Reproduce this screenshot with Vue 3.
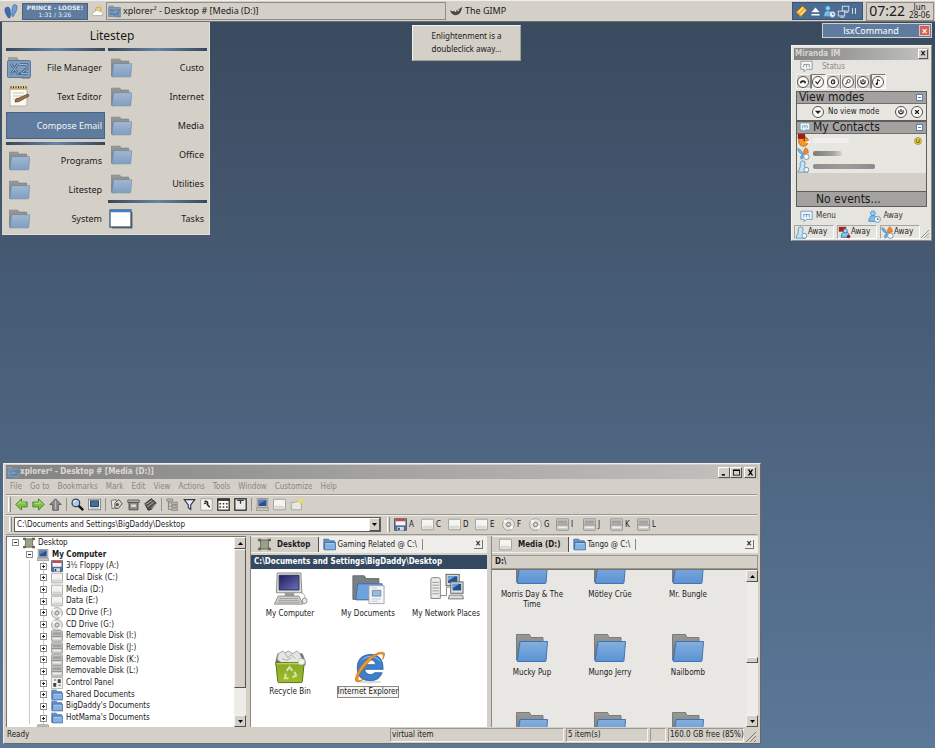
<script setup>
import { ref } from "vue";

// --- LITESTEP MENU ---
const menuLeft = [
  [
    { label: "File Manager", icon: "xp2" },
    { label: "Text Editor", icon: "notepad" },
    { label: "Compose Email", icon: "", active: true },
  ],
  [
    { label: "Programs", icon: "folder" },
    { label: "Litestep", icon: "folder" },
    { label: "System", icon: "folder" },
  ],
];
const menuRight = [
  [
    { label: "Custo", icon: "folder" },
    { label: "Internet", icon: "folder" },
    { label: "Media", icon: "folder" },
    { label: "Office", icon: "folder" },
    { label: "Utilities", icon: "folder" },
  ],
  [{ label: "Tasks", icon: "tasks" }],
];
const menuColumns = [menuLeft, menuRight];

// --- XPLORER WINDOW ---
const menus = ["File", "Go to", "Bookmarks", "Mark", "Edit", "View", "Actions", "Tools", "Window", "Customize", "Help"];
const toolGroups = [
  ["back", "forward", "up"],
  ["search", "screen"],
  ["copy", "archive", "eraser"],
  ["tree", "funnel", "wrench", "grid", "pane"],
  ["computer", "drive", "newfolder"],
];
const drives = [
  { letter: "A", icon: "floppy" },
  { letter: "C", icon: "drive" },
  { letter: "D", icon: "drive" },
  { letter: "E", icon: "drive" },
  { letter: "F", icon: "cd" },
  { letter: "G", icon: "cd" },
  { letter: "I", icon: "removable" },
  { letter: "J", icon: "removable" },
  { letter: "K", icon: "removable" },
  { letter: "L", icon: "removable" },
];
const address = ref("C:\\Documents and Settings\\BigDaddy\\Desktop");

const tree = [
  { label: "Desktop", icon: "desktop", level: 0, sign: "−" },
  { label: "My Computer", icon: "computer", level: 1, sign: "−", bold: true },
  { label: "3½ Floppy (A:)", icon: "floppy", level: 2 },
  { label: "Local Disk (C:)", icon: "drive", level: 2 },
  { label: "Media (D:)", icon: "drive", level: 2 },
  { label: "Data (E:)", icon: "drive", level: 2 },
  { label: "CD Drive (F:)", icon: "cd", level: 2 },
  { label: "CD Drive (G:)", icon: "cd", level: 2 },
  { label: "Removable Disk (I:)", icon: "removable", level: 2 },
  { label: "Removable Disk (J:)", icon: "removable", level: 2 },
  { label: "Removable Disk (K:)", icon: "removable", level: 2 },
  { label: "Removable Disk (L:)", icon: "removable", level: 2 },
  { label: "Control Panel", icon: "control", level: 2 },
  { label: "Shared Documents", icon: "smallfolder", level: 2 },
  { label: "BigDaddy's Documents", icon: "smallfolder", level: 2 },
  { label: "HotMama's Documents", icon: "smallfolder", level: 2 },
];

const panes = [
  {
    id: "left",
    tab: "Desktop",
    tabIcon: "desktop",
    other: "Gaming Related @ C:\\",
    path: "C:\\Documents and Settings\\BigDaddy\\Desktop",
    items: [
      { label: "My Computer", icon: "bigcomputer" },
      { label: "My Documents", icon: "bigdocs" },
      { label: "My Network Places", icon: "bignetwork" },
      { label: "Recycle Bin", icon: "bigbin" },
      { label: "Internet Explorer", icon: "bigie", focus: true },
    ],
  },
  {
    id: "right",
    tab: "Media (D:)",
    tabIcon: "drive",
    other: "Tango @ C:\\",
    path: "D:\\",
    items: [
      { label: "Morris Day & The Time", icon: "folder" },
      { label: "Mötley Crüe", icon: "folder" },
      { label: "Mr. Bungle", icon: "folder" },
      { label: "Mucky Pup", icon: "folder" },
      { label: "Mungo Jerry", icon: "folder" },
      { label: "Nailbomb", icon: "folder" },
      { label: "", icon: "folder" },
      { label: "", icon: "folder" },
      { label: "", icon: "folder" },
    ],
  },
];

// --- MIRANDA ---
const mirandaTools = ["phone", "check", "g", "lens", "power", "note"];
const protocols = ["icq", "msn", "wing"];
</script>

<template>
  <div class="desktop">
    <svg class="sprite" width="0" height="0" aria-hidden="true">
      <defs>
        <linearGradient id="gBack" x1="0" y1="0" x2="0" y2="1">
          <stop offset="0" stop-color="#9a9a98" />
          <stop offset="1" stop-color="#6b6f74" />
        </linearGradient>
        <linearGradient id="gShine" x1="0" y1="0" x2="0" y2="1">
          <stop offset="0" stop-color="#fff" stop-opacity=".25" />
          <stop offset="1" stop-color="#fff" stop-opacity="0" />
        </linearGradient>
        <linearGradient id="gScreen" x1="0" y1="0" x2="1" y2="1">
          <stop offset="0" stop-color="#1f1d5c" />
          <stop offset="1" stop-color="#6d72b8" />
        </linearGradient>
        <linearGradient id="gGreen" x1="0" y1="0" x2="0" y2="1">
          <stop offset="0" stop-color="#8aa62a" />
          <stop offset="1" stop-color="#9dbd2c" />
        </linearGradient>
      </defs>

      <symbol id="folder" viewBox="0 0 32 30">
        <path d="M.5 27V1.500h13l1.500 3h12V14L4 28z" fill="url(#gBack)" stroke="#7b7b78" />
        <path d="M4 8.500h27.500L30 27.500q0 1-1 1H2q-1 0-.8-1z" class="f-front" />
        <path d="M4.500 9H31L29.500 28H2z" fill="url(#gShine)" />
      </symbol>
      <symbol id="xp2" viewBox="0 0 24 24">
        <path d="M1 1h9l2 3h9v4H1zM14 20h9v3h-8z" fill="#a19f9a" />
        <rect x=".5" y="4.500" width="23" height="17" rx="1" fill="#7d9dbf" stroke="#5c7796" />
        <path d="M4 8l7 10M11 8L4 18M13 8.500h7v4l-6 5h7" fill="none" stroke="#44607f" stroke-width="2.600" />
        <path d="M4 8l7 10M11 8L4 18M13 8.500h7v4l-6 5h7" fill="none" stroke="#9db9d6" stroke-width="1" />
      </symbol>
      <symbol id="notepad" viewBox="0 0 24 24">
        <path d="M3 3h17v16q0 2-2 2H3z" fill="#fbfaf5" stroke="#b5b2a5" />
        <path d="M4 1v3M6.500 1v3M9 1v3M11.500 1v3M14 1v3M16.500 1v3M19 1v3" stroke="#4e3d17" />
        <path d="M3 4h17" stroke="#c9ad61" stroke-width="1.500" />
        <path d="M6 8h11M6 11h11M6 14h9" stroke="#c9c9c4" />
        <path d="M8 17q0-4 4-4l9-4 1 2-9 5q-2 1-5 1z" fill="#a3733f" stroke="#4d3a20" stroke-width=".7" />
      </symbol>
      <symbol id="tasks" viewBox="0 0 24 20">
        <path d="M2 3h21.500v16.500H3z" fill="#6d6f70" />
        <rect x="1" y="1" width="21" height="17" fill="#fff" stroke="#2c4f75" stroke-width="1.200" />
        <path d="M1 2h21" stroke="#457fb9" stroke-width="2.500" />
      </symbol>

      <!-- small icons, 16 unit grid -->
      <symbol id="smallfolder" viewBox="0 0 16 16">
        <path d="M1 14V1.500h6l1.500 2H14V8" fill="#6a94c6" stroke="#456d9d" />
        <path d="M2.500 5.500h13v9h-14z" fill="#85b1e3" stroke="#3667a3" />
        <path d="M3 7h11" stroke="#b7d3f2" />
      </symbol>
      <symbol id="desktop" viewBox="0 0 16 16">
        <path d="M0 1h4v3H0zM12 1h4v3h-4zM0 12h4v3H0zM12 12h4v3h-4z" fill="#6a6c63" />
        <path d="M2.500 2.500h11l-1 5 1 6h-11l1-6z" fill="#97a586" stroke="#4f5548" />
      </symbol>
      <symbol id="computer" viewBox="0 0 16 16">
        <rect x="1.500" y=".5" width="13" height="11" fill="#dfdfdb" stroke="#8b8b87" />
        <rect x="3" y="2" width="10" height="8" fill="#2c4f92" />
        <path d="M3 2h10L3 8z" fill="#5c7fbd" />
        <path d="M1 12h14l1 3.500H0z" fill="#c8c8c3" stroke="#85857f" stroke-width=".8" />
      </symbol>
      <symbol id="screen" viewBox="0 0 16 16">
        <rect x=".5" y="1.500" width="15" height="13" fill="#eeeeea" stroke="#777" />
        <rect x="3" y="3.500" width="10" height="7" fill="#4a6c9c" stroke="#143159" />
        <path d="M3 12.500h10" stroke="#999" />
      </symbol>
      <symbol id="floppy" viewBox="0 0 16 16">
        <rect x=".5" y=".5" width="15" height="15" rx="1" fill="#51719b" stroke="#344a68" />
        <path d="M2 1h12v8H2z" fill="#f6f5f5" />
        <path d="M2 1h12v3H2z" fill="#cf4444" />
        <path d="M4 11h8v4.500H4z" fill="#d7dbe2" />
        <path d="M5 12h2v3H5z" fill="#2a3d5b" />
      </symbol>
      <symbol id="drive" viewBox="0 0 16 16">
        <rect x=".5" y="1.500" width="15" height="13" rx="1" fill="#f4f4f1" stroke="#8f8f8b" />
        <path d="M2 11h12" stroke="#b6b6b2" />
        <path d="M4 9h1M7 9h1M10 9h1" stroke="#d1d1cd" />
        <path d="M1.500 12.500h13" stroke="#cfcfcb" />
      </symbol>
      <symbol id="removable" viewBox="0 0 16 16">
        <rect x=".5" y="1" width="15" height="14" rx="1" fill="#d0d0cd" stroke="#858581" />
        <path d="M2 3h12v4H2z" fill="#a1a19f" />
        <path d="M1 8.500h14" stroke="#777" />
        <path d="M3 11.500h10" stroke="#f3f3f1" stroke-width="1.500" />
      </symbol>
      <symbol id="cd" viewBox="0 0 16 16">
        <circle cx="8" cy="8" r="7.300" fill="#e4e4e1" stroke="#94948f" />
        <path d="M8 8L3 3M8 8l5 5" stroke="#fff" stroke-width="3" />
        <circle cx="8" cy="8" r="2.800" fill="#bdbdb9" stroke="#797975" />
        <circle cx="8" cy="8" r="1" fill="#fff" />
      </symbol>
      <symbol id="control" viewBox="0 0 16 16">
        <rect x=".5" y=".5" width="15" height="15" fill="#f3f3f0" stroke="#aaa" />
        <path d="M3 8h4v5H3zM9 3h4v5H9z" fill="#3f4a3c" />
        <path d="M4 4h3M10 11h3" stroke="#888" stroke-width="2" />
      </symbol>
      <symbol id="back" viewBox="0 0 16 16">
        <path d="M1 8l7-7v4h7v6H8v4z" fill="#7cc344" stroke="#3d7a17" />
        <path d="M3 8l4-4v2h6" stroke="#c5ee95" fill="none" />
      </symbol>
      <symbol id="forward" viewBox="0 0 16 16">
        <path d="M15 8L8 1v4H1v6h7v4z" fill="#7cc344" stroke="#3d7a17" />
        <path d="M3 6.500h6V4l4 4" stroke="#c5ee95" fill="none" />
      </symbol>
      <symbol id="up" viewBox="0 0 16 16">
        <path d="M8 1l7 7h-3.500v7h-7V8H1z" fill="#8c8d8b" stroke="#4e4f4d" />
        <path d="M8 3v11" stroke="#c4c5c3" />
      </symbol>
      <symbol id="search" viewBox="0 0 16 16">
        <path d="M9 9l6 6" stroke="#151515" stroke-width="3" />
        <circle cx="6" cy="6" r="4.700" fill="#a9cbe8" stroke="#33404e" stroke-width="1.500" />
        <path d="M3.500 6q0-3 3-3" stroke="#fff" fill="none" />
      </symbol>
      <symbol id="copy" viewBox="0 0 16 16">
        <path d="M1.500 3l6-1 2 10-7 1z" fill="#e6e6e2" stroke="#62625f" />
        <path d="M6 6l5-4 4 5-5 6-4-1z" fill="#d8d8d4" stroke="#3e3e3c" />
        <circle cx="9" cy="8" r="2" fill="#555" />
      </symbol>
      <symbol id="archive" viewBox="0 0 16 16">
        <path d="M2.500 5.500h11v9h-11z" fill="#8f8f8c" stroke="#393937" />
        <path d="M1 2.500h14v3H1z" fill="#b6b6b2" stroke="#454543" />
        <path d="M5 8h6v3H5z" fill="#dededb" />
      </symbol>
      <symbol id="eraser" viewBox="0 0 16 16">
        <path d="M1 7l8-6 6 5-6 8-4 1z" fill="#4f4f4d" stroke="#222" />
        <path d="M2 8l8-5M4 11l8-6M9 13l5-6" stroke="#c9c9c6" />
      </symbol>
      <symbol id="tree" viewBox="0 0 16 16">
        <path d="M3 3v11h4M3 6h4M3 10h4" stroke="#777" fill="none" />
        <path d="M1 1h7v3H1zM7 5h7v3H7zM7 9h7v2.500H7zM7 12.500h7v3H7z" fill="#b6b6b2" stroke="#7c7c78" stroke-width=".8" />
      </symbol>
      <symbol id="funnel" viewBox="0 0 16 16">
        <path d="M1.500 2h13L9.500 8.500V14l-3-2V8.500z" fill="#e9edf2" stroke="#273649" stroke-width="1.400" />
      </symbol>
      <symbol id="wrench" viewBox="0 0 16 16">
        <rect x="1" y="1" width="14" height="14" fill="#f4f4f1" stroke="#999" />
        <path d="M5.500 4.500a2.500 2.500 0 0 1 3.500 3.500l3 3.500" stroke="#222" stroke-width="1.800" fill="none" />
        <path d="M5 7l3-1" stroke="#222" stroke-width="1.500" />
      </symbol>
      <symbol id="grid" viewBox="0 0 16 16">
        <rect x="1" y="1" width="14" height="14" fill="#fff" stroke="#222" stroke-width="1.500" />
        <path d="M1 2.500h14" stroke="#222" stroke-width="2" />
        <path d="M3 7h10M3 11h10" stroke="#333" stroke-width="2" stroke-dasharray="2 2" />
      </symbol>
      <symbol id="pane" viewBox="0 0 16 16">
        <rect x="1" y="1" width="14" height="14" fill="#e8e8e4" stroke="#222" stroke-width="1.500" />
        <path d="M4 3h8M8 3v4" stroke="#333" stroke-width="1.500" />
      </symbol>
      <symbol id="newfolder" viewBox="0 0 16 16">
        <path d="M1.500 14.500v-9H6l1-1h5l2 2v8z" fill="#e8e7e0" stroke="#9c9b94" />
        <path d="M13 0v7M9.500 3.500h7" stroke="#f0df4e" stroke-width="2" />
      </symbol>

      <!-- large file icons -->
      <symbol id="bigcomputer" viewBox="0 0 36 36">
        <path d="M4 1h25l1 21H3z" fill="#dcdcd8" stroke="#888984" />
        <path d="M6 3.500h21v15.500H6z" fill="url(#gScreen)" stroke="#29285b" />
        <path d="M12 22h10v4H12z" fill="#9b9b97" />
        <path d="M5 25.500h22l4 8.500H1z" fill="#d6d6d1" stroke="#888984" />
        <path d="M6 28h20M5 30h22M4 32h24" stroke="#9d9d99" />
        <path d="M29 22q5 1 4 6" fill="none" stroke="#aaa" />
        <ellipse cx="33" cy="30.500" rx="2.500" ry="3" fill="#e9e9e5" stroke="#8d8d89" />
      </symbol>
      <symbol id="bigdocs" viewBox="0 0 36 36">
        <path d="M1.500 29V4h12l2 3H29v22z" fill="#7a7f84" stroke="#64696e" />
        <path d="M6.500 12.500h26l-1 17H4.500z" fill="#6fa3dc" stroke="#3b6dab" />
        <path d="M18.500 14.500h16v19h-16z" fill="#f5f6f8" stroke="#9ea4ab" />
        <path d="M22 19.500h9v6h-9z" fill="#9bbbe0" stroke="#7188a4" />
        <path d="M21 17h6M21 28.500h10M21 31h7" stroke="#c0c3c8" />
      </symbol>
      <symbol id="bignetwork" viewBox="0 0 36 36">
        <path d="M1.500 8q0-2 2-2h6q2 0 2 2v20h-10z" fill="#ebebe7" stroke="#7f807c" />
        <path d="M3 11h7M3 14h7M3 17h7M3 20h7M3 23h7" stroke="#989995" />
        <rect x="17.500" y="2.500" width="14" height="12" fill="#d9dad7" stroke="#5e625f" />
        <rect x="19.500" y="4.500" width="10" height="7" fill="#1f5296" />
        <path d="M19.500 4.500h8l-8 5z" fill="#79a4d6" />
        <path d="M12 25h6V16h4" fill="none" stroke="#7d807c" />
        <rect x="22.500" y="10.500" width="13" height="12" fill="#e1e2de" stroke="#5b5e5a" />
        <rect x="24.500" y="12.500" width="9" height="7" fill="#1f4e91" />
        <path d="M24.500 12.500h7l-7 5z" fill="#6c9bd3" />
        <path d="M21 24.500h14l1 4H20z" fill="#dadbd7" stroke="#777a76" />
      </symbol>
      <symbol id="bigbin" viewBox="0 0 36 36">
        <path d="M2.500 12l2-8h26l3 8v4h-31z" fill="#6d726a" stroke="#83877f" />
        <path d="M5 4l5-3 2 2 4-2 4 3 5-3 3 3 2 5 4 3-5 3-3-2-7 2-5-2-5 1-5-4z" fill="#e4e6e3" stroke="#9fa29d" />
        <path d="M12 3l3 5 4-3 4 4M9 9l5 2 5-3" fill="none" stroke="#a9aca7" />
        <path d="M2.500 13.500h30l-2 20q0 1-1.500 1h-23q-1.500 0-1.500-1z" fill="url(#gGreen)" stroke="#54700c" />
        <path d="M3 14.500h29" stroke="#b9d64e" stroke-width="1.500" />
        <path d="M27 9l6 1v5l-5 1-2-3z" fill="#f2f3f1" stroke="#aaada7" stroke-width=".6" />
        <path d="M14 22l3-4 3 4M22 23l2 4-4 2M16 30h-4l1-5" fill="none" stroke="#d5e69f" stroke-width="2.200" />
      </symbol>
      <symbol id="bigie" viewBox="0 0 36 36">
        <ellipse cx="20" cy="34" rx="12" ry="1.500" fill="#bbb" opacity=".5" />
        <path d="M33.500 20.500H14q1 5.500 6 5.500 3 0 4.500-2h8q-3 8.500-12.500 8.500Q6 32.500 6 19T20 4.500Q34 5 33.500 20.500zM14 15.500h11.500Q25 10.500 20 10.500t-6 5z" fill="#3c7fcd" stroke="#245aa2" stroke-width=".8" />
        <path d="M9 13q4-7 12-7 8 1 10 7-4-5-11-5T9 13z" fill="#8ab7e9" />
        <path d="M33 10Q39 0 28 3 17 7 9 19 1 33 6 34q4 0 9-5-7 5-8 3-1-5 6-13Q25 4 31 4q4 0 2 6z" fill="#f0972b" stroke="#c16f12" stroke-width=".7" />
      </symbol>

      <!-- tray and taskbar -->
      <symbol id="feet" viewBox="0 0 16 18">
        <path d="M3.500 4Q6 3 7 7q1 5 0 9-2 1-3-1Q1 11 1 7q0-3 2.500-3z" fill="#3a6cb0" stroke="#234a82" stroke-width=".6" />
        <path d="M12 1q3 0 3 3 0 4-3 8-1 3-2 3-2-1-1-5Q9 1 12 1z" fill="#6f9ad3" stroke="#2f5d9c" stroke-width=".6" />
      </symbol>
      <symbol id="weather" viewBox="0 0 16 14">
        <circle cx="9" cy="5" r="3.500" fill="#f3d25f" stroke="#d19f2c" />
        <path d="M2.500 12Q0 8 4.500 7.500 6 4 10 6.500q5 0 4.500 5.500z" fill="#fff" stroke="#a9a9a4" />
      </symbol>
      <symbol id="gimp" viewBox="0 0 16 14">
        <path d="M0 5q3 3 6 1 5-1 9-5-1 7-4 9-5 3-8 0Q1 9 0 5z" fill="#4c4a45" />
        <circle cx="7" cy="6.500" r="1" fill="#fff" />
        <circle cx="10" cy="5.500" r="1" fill="#fff" />
      </symbol>
      <symbol id="ticket" viewBox="0 0 16 16">
        <path d="M1 9l8-8 6 5-8 9z" fill="#f4a92d" stroke="#8c5a12" />
        <path d="M4 9l6-6M7 12l6-6" stroke="#fff0a5" stroke-width="1.500" />
      </symbol>
      <symbol id="eject" viewBox="0 0 16 16">
        <path d="M8 3l5 6H3zM3 11h10v2H3z" fill="#fff" />
      </symbol>
      <symbol id="person" viewBox="0 0 16 16">
        <circle cx="6" cy="4" r="3" fill="#8fd0f4" stroke="#2e7fb5" stroke-width=".8" />
        <path d="M1 14q0-7 5-7t5 7z" fill="#78c1ee" stroke="#2e7fb5" stroke-width=".8" />
        <circle cx="11.500" cy="11.500" r="3.800" fill="#eff7fc" stroke="#5a8aab" />
        <path d="M11.500 9.500v2h2" stroke="#456" fill="none" />
      </symbol>
      <symbol id="lan" viewBox="0 0 16 16">
        <rect x="6.500" y="1.500" width="8" height="6" fill="#486d99" stroke="#eee" />
        <rect x="1.500" y="7.500" width="8" height="6" fill="#486d99" stroke="#eee" />
        <path d="M4 15h5M10 9h4" stroke="#eee" />
      </symbol>

      <!-- miranda -->
      <symbol id="bubble" viewBox="0 0 16 16">
        <path d="M1 1.500h14v10H8l-3 3v-3H1z" fill="#eef5fb" stroke="currentColor" />
        <path d="M4.500 9V5.500h7V9M8 5.500V9" fill="none" stroke="currentColor" />
      </symbol>
      <symbol id="phone" viewBox="0 0 16 16"><path d="M3 10q0-5 5-5t5 5h-3V8.500H6V10z" fill="#222" /></symbol>
      <symbol id="check" viewBox="0 0 16 16"><path d="M4 7l3 4 5-7" fill="none" stroke="#222" stroke-width="1.800" /></symbol>
      <symbol id="g" viewBox="0 0 16 16"><path d="M11 6q-3-3-5 0-2 5 2 5 3 0 3-3H8" fill="none" stroke="#222" stroke-width="1.800" /></symbol>
      <symbol id="lens" viewBox="0 0 16 16"><circle cx="9" cy="6.500" r="2.500" fill="none" stroke="#333" stroke-width="1.300" /><path d="M7 8l-3 4" stroke="#333" stroke-width="1.800" /></symbol>
      <symbol id="power" viewBox="0 0 16 16"><path d="M5 5q-2 5 3 6 5-1 3-6M8 3v5" fill="none" stroke="#222" stroke-width="1.800" /></symbol>
      <symbol id="note" viewBox="0 0 16 16"><path d="M7 11V4l4 2" fill="none" stroke="#111" stroke-width="1.500" /><circle cx="6" cy="11" r="1.800" fill="#111" /></symbol>
      <symbol id="down" viewBox="0 0 16 16"><path d="M3 6h10L8 11z" fill="#222" /></symbol>
      <symbol id="cross" viewBox="0 0 16 16"><path d="M5 5l6 6M11 5l-6 6" stroke="#111" stroke-width="2.200" /></symbol>
      <symbol id="icq" viewBox="0 0 16 16">
        <path d="M7 1q3 0 3 3 0 2-1 3l4 8H1l3-7Q3 1 7 1z" fill="#c7e2f3" stroke="#4f87b3" />
        <circle cx="11.500" cy="12" r="3" fill="#f3f8fb" stroke="#63869f" />
      </symbol>
      <symbol id="msn" viewBox="0 0 16 16">
        <path d="M1 1h9v6H1z" fill="#a82018" />
        <path d="M4 14q0-7 5-7t5 7z" fill="#86c3ea" stroke="#2e6fa0" />
        <circle cx="9" cy="6" r="2.500" fill="#a9d5f2" stroke="#2e6fa0" />
        <circle cx="13" cy="13" r="2.200" fill="#9d1c1c" />
      </symbol>
      <symbol id="wing" viewBox="0 0 16 16">
        <path d="M7 9Q1 7 1 2q5 1 6 7zM7 9q-4 2-2 6 4-1 2-6z" fill="#6fb7e6" stroke="#2b75ac" stroke-width=".7" />
        <path d="M8 9Q8 2 11 1q3 2 3 6z" fill="#ee8b2c" stroke="#b35c10" stroke-width=".7" />
        <circle cx="11.500" cy="12" r="3.400" fill="#f3f8fb" stroke="#63869f" />
      </symbol>
      <symbol id="gg" viewBox="0 0 16 16">
        <circle cx="8" cy="9" r="6" fill="#f39a24" stroke="#a75a0c" />
        <path d="M10 10l6-2v4z" fill="#fff" />
        <path d="M1 0h9v6H1z" fill="#9d1c14" />
        <circle cx="9" cy="7.500" r="1" fill="#222" />
      </symbol>
      <symbol id="smile" viewBox="0 0 16 16">
        <circle cx="8" cy="8" r="7" fill="#e6d33c" stroke="#6d6316" />
        <path d="M4 9q4 5 8 0" fill="none" stroke="#222" stroke-width="1.500" />
        <circle cx="5.500" cy="6" r="1.200" /><circle cx="10.500" cy="6" r="1.200" />
      </symbol>
    </svg>

    <!-- TASKBAR -->
    <header class="taskbar">
      <button class="start" aria-label="Start"><svg><use href="#feet" /></svg></button>
      <div class="player"><b>PRINCE - LOOSE!</b><span>1:31 / 3:26</span></div>
      <svg class="weather"><use href="#weather" /></svg>
      <button class="task task-active"><svg><use href="#xp2" /></svg>xplorer² - Desktop # [Media (D:)]</button>
      <button class="task"><svg><use href="#gimp" /></svg>The GIMP</button>
      <div class="tray">
        <svg><use href="#ticket" /></svg>
        <svg><use href="#eject" /></svg>
        <svg><use href="#person" /></svg>
        <svg><use href="#lan" /></svg>
        <i></i>
      </div>
      <div class="clock"><time>07:22</time><span class="date"><span>Jun</span><span>28-06</span></span></div>
    </header>

    <!-- POPUP MENU -->
    <nav class="popup">
      <h1>Litestep</h1>
      <div class="popup-cols">
        <div v-for="(column, c) in menuColumns" :key="c" class="popup-col">
          <template v-for="(group, g) in column" :key="g">
            <div class="bar"></div>
            <button
              v-for="item in group"
              :key="item.label"
              class="entry"
              :class="{ 'entry-active': item.active }"
            >
              <svg :class="'e-' + item.icon"><use v-if="item.icon" :href="'#' + item.icon" /></svg>
              {{ item.label }}
            </button>
          </template>
        </div>
      </div>
    </nav>

    <div class="hint">Enlightenment is a<br />doubleclick away...</div>

    <div class="command">
      <span>lsxCommand</span>
      <button aria-label="Close">×</button>
    </div>

    <!-- MIRANDA IM -->
    <section class="miranda">
      <div class="m-title"><b>Miranda IM</b><button class="box-btn" aria-label="Close">×</button></div>
      <div class="m-status"><svg><use href="#bubble" /></svg>Status</div>
      <div class="m-tools">
        <button v-for="t in mirandaTools" :key="t" :class="{ down: t === 'check' || t === 'note' }" :aria-label="t">
          <svg><use :href="'#' + t" /></svg>
        </button>
      </div>
      <div class="m-frame">
        <div class="m-head"><span>View modes</span><button class="fold" aria-label="Collapse"></button></div>
        <div class="m-mode">
          <button class="round" aria-label="Choose"><svg><use href="#down" /></svg></button>
          <span>No view mode</span>
          <button class="round" aria-label="Reset"><svg><use href="#power" /></svg></button>
          <button class="round" aria-label="Clear"><svg><use href="#cross" /></svg></button>
        </div>
      </div>
      <div class="m-frame">
        <div class="m-head"><svg><use href="#bubble" /></svg><span>My Contacts</span><button class="fold" aria-label="Collapse"></button></div>
        <ul class="m-list">
          <li><svg><use href="#gg" /></svg><i class="smear smear-a"></i><svg class="smile"><use href="#smile" /></svg></li>
          <li><svg><use href="#wing" /></svg><i class="smear smear-b"></i></li>
          <li><svg><use href="#icq" /></svg><i class="smear smear-c"></i></li>
        </ul>
        <div class="m-events">No events...</div>
      </div>
      <div class="m-menu">
        <button><svg><use href="#bubble" /></svg>Menu</button>
        <button><svg><use href="#person" /></svg>Away</button>
      </div>
      <div class="m-protos">
        <span v-for="p in protocols" :key="p"><svg><use :href="'#' + p" /></svg>Away</span>
        <svg class="grip-corner" viewBox="0 0 10 10"><path d="M0 10L10 0M4 10l6-6M8 10l2-2" /></svg>
      </div>
    </section>

    <!-- XPLORER -->
    <section class="window">
      <div class="w-title">
        <svg><use href="#xp2" /></svg>
        <b>xplorer² - Desktop # [Media (D:)]</b>
        <button class="box-btn" aria-label="Minimize"><svg viewBox="0 0 9 8"><path d="M1 6h4v2H1z" /></svg></button>
        <button class="box-btn" aria-label="Maximize"><svg viewBox="0 0 9 8"><path d="M0 0h9v8H0zM1 2v5h7V2z" fill-rule="evenodd" /></svg></button>
        <button class="box-btn last" aria-label="Close"><svg viewBox="0 0 9 8"><path d="M1 0h2l1.500 2.500L6 0h2L5.500 4 8 8H6L4.500 5.500 3 8H1l2.500-4z" /></svg></button>
      </div>
      <div class="w-menu"><button v-for="m in menus" :key="m">{{ m }}</button></div>
      <div class="w-tools">
        <i class="grip"></i>
        <div v-for="(group, g) in toolGroups" :key="g" class="tool-group">
          <button v-for="t in group" :key="t" :aria-label="t"><svg><use :href="'#' + t" /></svg></button>
        </div>
      </div>
      <div class="w-address">
        <i class="grip"></i>
        <div class="combo">
          <input v-model="address" type="text" aria-label="Address" />
          <button class="arrow" aria-label="Show addresses"><svg viewBox="0 0 7 4"><path d="M0 0h7L3.500 4z" /></svg></button>
        </div>
        <i class="grip grip-drives"></i>
        <button v-for="d in drives" :key="d.letter" class="drive"><svg><use :href="'#' + d.icon" /></svg>{{ d.letter }}</button>
      </div>

      <div class="w-body">
        <div class="tree">
          <ul>
            <li v-for="n in tree" :key="n.label" :class="['lv' + n.level, { bold: n.bold }]">
              <button class="sign" :class="{ minus: n.sign }" :aria-label="n.label"></button>
              <svg><use :href="'#' + n.icon" /></svg>{{ n.label }}
            </li>
            <li class="partial"><svg><use href="#removable" /></svg></li>
          </ul>
          <div class="scroll">
            <button class="arrow" aria-label="Up"><svg viewBox="0 0 7 4"><path d="M0 4h7L3.500 0z" /></svg></button>
            <i class="thumb thumb-tree"></i>
            <button class="arrow push" aria-label="Down"><svg viewBox="0 0 7 4"><path d="M0 0h7L3.500 4z" /></svg></button>
          </div>
        </div>

        <div v-for="p in panes" :key="p.id" class="pane" :class="'pane-' + p.id">
          <div class="tabs">
            <button class="tab tab-on"><svg><use :href="'#' + p.tabIcon" /></svg>{{ p.tab }}</button>
            <button class="tab"><svg><use href="#smallfolder" /></svg>{{ p.other }}</button>
            <button class="tab-close" aria-label="Close tab">×</button>
          </div>
          <div class="path">{{ p.path }}</div>
          <div class="files">
            <div class="file-grid">
              <div v-for="(f, i) in p.items" :key="i" class="file">
                <svg :class="{ 'file-folder': f.icon === 'folder' }"><use :href="'#' + f.icon" /></svg>
                <span v-if="f.label" :class="{ focus: f.focus }">{{ f.label }}</span>
              </div>
            </div>
            <div v-if="p.id === 'right'" class="scroll">
              <button class="arrow" aria-label="Up"><svg viewBox="0 0 7 4"><path d="M0 4h7L3.500 0z" /></svg></button>
              <i class="thumb thumb-files"></i>
              <button class="arrow" aria-label="Down"><svg viewBox="0 0 7 4"><path d="M0 0h7L3.500 4z" /></svg></button>
            </div>
          </div>
        </div>
      </div>

      <footer class="w-status">
        <span class="ready">Ready</span>
        <span>virtual item</span>
        <span>5 item(s)</span>
        <span></span>
        <span>160.0 GB free (85%)</span>
        <svg class="grip-corner" viewBox="0 0 10 10"><path d="M0 10L10 0M4 10l6-6M8 10l2-2" /></svg>
      </footer>
    </section>
  </div>
</template>

<style>
html,
body {
  margin: 0;
  overflow: hidden;
}
</style>

<style scoped>
.desktop {
  --face: #d4d0c8;
  --blue: #5f7c9e;
  position: relative;
  height: 100vh;
  overflow: hidden;
  background: linear-gradient(#39495d, #5b7899);
  font-family: "DejaVu Sans Condensed", "DejaVu Sans", "Liberation Sans", sans-serif;
  font-size: 8px;
  line-height: 10px;
  color: #1a1a1a;
}
* {
  box-sizing: border-box;
}
button,
input {
  font: inherit;
  color: inherit;
  border: 0;
  padding: 0;
  margin: 0;
  background: none;
  white-space: nowrap;
}
ul {
  list-style: none;
  margin: 0;
  padding: 0;
}
svg {
  display: block;
  flex: none;
  width: 13px;
  height: 13px;
}
.sprite {
  position: absolute;
  width: 0;
  height: 0;
}
.f-front {
  fill: var(--folder, #5b93d3);
  stroke: var(--folder-line, #4074b3);
}

/* Taskbar */
.taskbar {
  display: flex;
  align-items: center;
  height: 22px;
  padding: 0 1px 0 4px;
  background: var(--face);
  border-top: 1px solid #f0eeea;
  border-bottom: 1px solid #6d6f70;
  font-family: "Noto Sans", "Open Sans", sans-serif;
  font-size: 9px;
}
.start svg {
  width: 14px;
  height: 17px;
}
.player {
  display: flex;
  flex-direction: column;
  justify-content: center;
  align-items: center;
  width: 66px;
  height: 17px;
  margin-left: 4px;
  background: var(--blue);
  border: 1px solid #486283;
  font-family: "DejaVu Sans", sans-serif;
  font-size: 6px;
  line-height: 7px;
  color: #e9eff6;
  white-space: nowrap;
}
.weather {
  margin: 0 2px 0 3px;
}
.task {
  display: flex;
  align-items: center;
  gap: 2px;
  height: 18px;
  padding: 0 4px;
}
.task-active {
  flex: 0 1 340px;
  padding: 0 1px;
  border: 1px solid #8f8d87;
}
.tray {
  display: flex;
  align-items: center;
  gap: 1px;
  height: 18px;
  margin-left: auto;
  padding: 0 6px 0 2px;
  background: #4b6b92;
  border: 1px solid #3a5474;
}
.tray i {
  width: 4px;
  height: 6px;
  margin-left: 1px;
  border: solid #d9dcdf;
  border-width: 0 1px;
}
.clock {
  display: flex;
  align-items: center;
  gap: 4px;
  height: 19px;
  margin-left: 3px;
  padding: 0 3px 0 2px;
  border: 1px solid #8f8d87;
  font-size: 14px;
}
.date {
  display: flex;
  flex-direction: column;
  align-items: center;
  font-size: 8px;
  line-height: 8px;
}

/* Litestep popup */
.popup {
  --folder: #819fc1;
  --folder-line: #6d8bad;
  position: absolute;
  top: 22px;
  left: 2px;
  width: 208px;
  padding: 0 2px 1px 4px;
  background: var(--face);
  border: 1px solid #e3e0da;
  border-width: 0 1px 1px 0;
  font-family: "Noto Sans", "Open Sans", sans-serif;
  font-size: 9px;
}
.popup h1 {
  margin: 0;
  padding: 4px 0 3px 11px;
  font-size: 12px;
  font-weight: 400;
  line-height: 19px;
  text-align: center;
}
.popup-cols {
  display: grid;
  grid-template-columns: 1fr 1fr;
  gap: 3px;
}
.popup-col {
  display: flex;
  flex-direction: column;
}
.bar {
  height: 3px;
  margin-bottom: 2px;
  background: linear-gradient(90deg, #36475a, #6685a6 50%, #36475a);
}
.popup-col .bar:not(:first-child) {
  margin: 2px 0 1px;
}
.entry {
  display: flex;
  align-items: center;
  justify-content: space-between;
  height: 29px;
  padding: 0 3px;
}
.entry svg {
  width: 21px;
  height: 20px;
}
.entry .e-xp2,
.entry .e-notepad,
.entry .e-tasks {
  width: 24px;
  height: 24px;
  margin-left: -2px;
}
.entry-active {
  height: 27px;
  margin: 1px 0;
  background: var(--blue);
  border: 1px solid #486283;
  padding: 0 2px;
  color: #f1f4f8;
}

.hint {
  position: absolute;
  top: 25px;
  left: 412px;
  width: 109px;
  padding: 3px 0 5px;
  background: var(--face);
  border: 1px solid #f3f1ed;
  border-right-color: #a19e97;
  border-bottom-color: #a19e97;
  font-family: "Noto Sans", sans-serif;
  line-height: 13px;
  text-align: center;
}

.command {
  position: absolute;
  top: 23px;
  right: 3px;
  display: flex;
  align-items: center;
  width: 110px;
  height: 15px;
  padding-right: 1px;
  background: var(--blue);
  border: 1px solid #d4d0c8;
  font-family: "Noto Sans", sans-serif;
  font-size: 9px;
  color: #fff;
}
.command span {
  flex: 1;
  text-align: center;
}
.command button {
  width: 11px;
  height: 11px;
  background: #d4605b;
  border: 1px solid #e9c3bf;
  font-size: 10px;
  font-weight: 700;
  line-height: 8px;
}

/* Miranda */
.miranda {
  position: absolute;
  top: 45px;
  right: 3px;
  width: 141px;
  padding: 2px 2px 1px;
  background: #e6e4df;
  border: 1px solid #f4f3f0;
  border-right-color: #8d8b85;
  border-bottom-color: #8d8b85;
}
.m-title {
  display: flex;
  align-items: center;
  justify-content: space-between;
  height: 12px;
  padding: 0 1px;
  background: linear-gradient(90deg, #848484, #c2c2c0);
  color: #d8d5cf;
}
.box-btn {
  display: flex;
  align-items: center;
  justify-content: center;
  width: 10px;
  height: 10px;
  background: var(--face);
  border: 1px solid #fff;
  border-right-color: #55534f;
  border-bottom-color: #55534f;
  font-weight: 700;
  line-height: 8px;
  color: #000;
}
.m-status {
  display: flex;
  align-items: center;
  gap: 9px;
  height: 13px;
  padding-left: 6px;
  color: #8c8983;
}
.m-tools {
  display: flex;
  width: max-content;
  margin: 1px 0 2px 2px;
  background: var(--face);
}
.m-tools button {
  width: 15px;
  height: 15px;
  border: 1px solid #f5f4f1;
  border-right-color: #85827c;
}
.m-tools .down {
  background: #f1efeb;
  border-color: #7c7973 #fff #fff #7c7973;
}
.m-tools svg,
.round svg {
  width: 12px;
  height: 12px;
  border: 1px solid #55534f;
  border-radius: 50%;
  background: #fafaf8;
}
.m-frame {
  margin: 0 2px;
  background: var(--face);
  border: 1px solid #5f5e5b;
}
.m-head {
  display: flex;
  align-items: center;
  gap: 2px;
  height: 12px;
  padding: 0 3px 0 2px;
  background: #a3a2a0;
  border-bottom: 1px solid #6e6d6a;
  font-size: 12px;
  line-height: 13px;
}
.m-head span {
  flex: 1;
}
.m-head svg,
.m-menu svg {
  color: #5f8fb8;
}
.m-head svg {
  width: 12px;
  height: 11px;
}
.m-status svg {
  color: #8d8b86;
}
.fold {
  width: 7px;
  height: 7px;
  background: linear-gradient(#5c7fa5, #5c7fa5) center / 3px 1px no-repeat #fff;
  border: 1px solid #5c7fa5;
}
.m-mode {
  display: flex;
  align-items: center;
  gap: 4px;
  height: 16px;
  padding: 0 3px 0 15px;
  background: #e8e6e1;
}
.m-mode span {
  flex: 1;
}
.m-list {
  height: 57px;
}
.m-list li {
  display: flex;
  align-items: center;
  gap: 3px;
  height: 13px;
  background: #e8e6e1;
}
.m-list .smile {
  width: 8px;
  height: 8px;
  margin: 0 4px 0 auto;
}
.smear {
  height: 5px;
  border-radius: 2px;
}
.smear-a {
  width: 36px;
  background: #f0efeb;
}
.smear-b {
  width: 29px;
  background: linear-gradient(90deg, #7b7b7b, #a3a3a1 70%, #d8d6d2);
}
.smear-c {
  width: 62px;
  background: linear-gradient(90deg, #8d8d8d, #9f9d9b 50%, #8c8a8d);
}
.m-events {
  height: 15px;
  padding-left: 19px;
  overflow: hidden;
  background: #a3a2a0;
  border-top: 1px solid #5f5e5b;
  font-size: 12px;
  line-height: 15px;
}
.m-menu {
  display: grid;
  grid-template-columns: 1fr 1fr;
  height: 18px;
}
.m-menu button {
  display: flex;
  align-items: center;
  gap: 3px;
  padding-left: 6px;
  color: #33322f;
}
.m-protos {
  display: grid;
  grid-template-columns: 1fr 1fr 1fr 6px;
  gap: 3px;
  align-items: end;
}
.m-protos span {
  display: flex;
  align-items: center;
  height: 14px;
  border: 1px solid #a8a59e;
  border-right-color: #fff;
  border-bottom-color: #fff;
}
.grip-corner {
  width: 10px;
  height: 10px;
  fill: none;
  stroke: #7f7c76;
}
.m-protos .grip-corner {
  justify-self: end;
  width: 8px;
}

/* xplorer window */
.window {
  position: absolute;
  left: 3px;
  bottom: 4px;
  width: calc(100vw - 177px);
  padding: 1px 2px;
  background: var(--face);
  border: 1px solid #efede9;
  border-right-color: #6b6964;
  border-bottom-color: #6b6964;
}
.w-title {
  display: flex;
  align-items: center;
  height: 14px;
  padding: 0 2px 0 1px;
  background: linear-gradient(90deg, #838383, #c3c2bf);
  color: #dcd9d3;
}
.w-title > svg {
  width: 12px;
  margin-right: 1px;
}
.w-title b {
  flex: 1;
}
.w-title .box-btn {
  width: 12px;
  height: 11px;
}
.w-title .box-btn svg {
  width: 7px;
  height: 7px;
}
.last {
  margin-left: 2px;
}
.w-menu {
  display: flex;
  gap: 8px;
  height: 15px;
  padding-left: 4px;
  color: #8a8780;
}
.w-tools,
.w-address {
  display: flex;
  align-items: center;
  height: 20px;
  margin-right: 1px;
  padding-left: 2px;
  border-top: 1px solid #9a978f;
  box-shadow: inset 0 1px #efede9;
}
.w-address {
  height: 21px;
  padding-left: 3px;
  border-bottom: 1px solid #9a978f;
}
.grip {
  width: 3px;
  height: 15px;
  border: solid;
  border-width: 0 1px;
  border-color: #fff #8b8882 #fff #fff;
}
.tool-group {
  display: flex;
  gap: 4px;
  padding: 0 4px;
}
.tool-group + .tool-group {
  border-left: 1px solid #95928b;
}
.combo {
  display: flex;
  width: 367px;
  height: 15px;
  margin-left: 2px;
  background: #fff;
  border: 1px solid #605e59;
}
.combo input {
  flex: 1;
  min-width: 0;
  padding-left: 2px;
  outline: 0;
}
.arrow {
  display: flex;
  align-items: center;
  justify-content: center;
  width: 11px;
  height: 12px;
  background: var(--face);
  border: 1px solid #f5f4f1;
  border-right-color: #55534f;
  border-bottom-color: #55534f;
}
.arrow svg {
  width: 5px;
  height: 3px;
}
.combo .arrow {
  height: 13px;
}
.grip-drives {
  margin: 0 4px 0 6px;
}
.drive {
  display: flex;
  align-items: center;
  gap: 2px;
  width: 27px;
}

.w-body {
  display: grid;
  grid-template-columns: 240px 237px 1fr;
  grid-template-rows: minmax(0, 1fr);
  gap: 4px;
  height: 191px;
  margin-top: 1px;
}
.tree {
  display: flex;
  background: #fff;
  border: 1px solid #77746e;
  border-width: 1px 0 0 1px;
}
.tree ul {
  flex: 1;
  display: flex;
  flex-direction: column;
  overflow: hidden;
}
.tree li {
  flex: 1 1 0;
  display: flex;
  align-items: center;
  min-height: 0;
}
.tree li svg {
  width: 12px;
  height: 12px;
  margin: 0 3px 0 4px;
}
.tree .partial {
  flex: 0 0 3px;
  align-items: flex-start;
  padding-left: 26px;
}
.lv0 {
  padding-left: 5px;
}
.lv1 {
  padding-left: 19px;
}
.lv2 {
  padding-left: 33px;
  background:
    linear-gradient(#c9c9c9, #c9c9c9) 22px 0 / 1px 100% no-repeat,
    linear-gradient(#c9c9c9, #c9c9c9) 36px 0 / 1px 100% no-repeat;
}
.bold,
.tab-on {
  font-weight: 700;
}
.sign {
  width: 7px;
  height: 7px;
  background:
    linear-gradient(#222, #222) center / 3px 1px no-repeat,
    linear-gradient(#222, #222) center / 1px 3px no-repeat,
    #fff;
  border: 1px solid #8f8f8f;
}
.minus {
  background: linear-gradient(#222, #222) center / 3px 1px no-repeat #fff;
}
.scroll {
  display: flex;
  flex-direction: column;
  width: 12px;
  background: #eeece8;
}
.scroll .arrow {
  width: 12px;
}
.push {
  margin-top: auto;
}
.thumb {
  background: var(--face);
  border: 1px solid #f5f4f1;
  border-right-color: #55534f;
  border-bottom-color: #55534f;
}
.thumb-tree {
  height: 139px;
}
.thumb-files {
  height: 6px;
  margin: 75px 0 auto;
}
.pane {
  display: flex;
  flex-direction: column;
  min-width: 0;
  border-left: 1px solid #8b8882;
}
.tabs {
  display: flex;
  align-items: center;
  height: 17px;
  background: #efeeea;
}
.tab {
  display: flex;
  align-items: center;
  gap: 1px;
  padding: 0 6px 0 4px;
}
.tab::after {
  content: "";
  width: 1px;
  height: 11px;
  margin-left: 4px;
  background: #8b8882;
}
.tab-on {
  gap: 6px;
  height: 15px;
  padding: 0 8px 0 7px;
  background: var(--face);
  border-right: 1px solid #55534f;
}
.tab-on::after {
  content: none;
}
.tab-close {
  width: 9px;
  height: 9px;
  margin: 0 4px 0 auto;
  border-right: 1px solid #77746e;
  border-bottom: 1px solid #77746e;
  font-weight: 700;
  line-height: 8px;
}
.path {
  height: 14px;
  margin-top: 2px;
  padding-left: 3px;
  font-weight: 700;
  line-height: 14px;
}
.pane-left .path {
  background: #34485f;
  color: #fff;
}
.pane-right .path {
  border: 1px solid #9a978f;
  border-left: 0;
  line-height: 12px;
}
.files {
  flex: 1;
  display: flex;
  min-height: 0;
  overflow: hidden;
  background: #fff;
}
.pane-right .files {
  background: #e8e7e3;
  border-top: 1px solid #77746e;
}
.file-grid {
  flex: 1;
  display: grid;
  grid-template-columns: repeat(3, 78px);
  grid-auto-rows: 78px;
}
.file {
  display: flex;
  flex-direction: column;
  align-items: center;
  text-align: center;
}
.file svg {
  width: 35px;
  height: 34px;
  margin: 3px 0 2px;
}
.file span {
  max-width: 76px;
  border: 1px solid transparent;
  white-space: nowrap;
}
.pane-right .file-grid {
  margin: -19px 0 0 1px;
}
.pane-right .file span {
  white-space: normal;
}
.file .file-folder {
  width: 32px;
  height: 30px;
  margin: 4px 0;
}
.file .focus {
  border-color: #8b8882;
  background: #f7f6f4;
}
.w-status {
  display: grid;
  grid-template-columns: 1fr 174px 82px 16px 76px 12px;
  gap: 2px;
  height: 14px;
  margin-top: 1px;
}
.w-status span {
  padding-left: 1px;
  border: 1px solid #9a978f;
  border-right-color: #f5f4f1;
  border-bottom-color: #f5f4f1;
  line-height: 12px;
  white-space: nowrap;
}
.w-status .ready {
  border-color: transparent;
  padding-left: 0;
}
.w-status .grip-corner {
  align-self: end;
}
</style>
